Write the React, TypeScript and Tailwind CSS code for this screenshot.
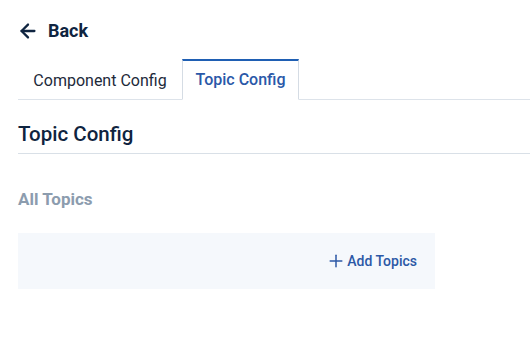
import { ArrowLeft, Plus } from 'lucide-react';

export default function App() {
  return (
    <div className="w-[530px] h-[353px] bg-white pl-[18px] font-['Roboto',sans-serif] overflow-hidden">
      <div className="flex items-center gap-[9px] pt-[20px] h-[42px] text-[#0f2440]">
        <ArrowLeft size={22} strokeWidth={2.5} className="-ml-[1px]" />
        <span className="text-[18px] font-bold leading-none">Back</span>
      </div>

      <div className="flex items-end h-[58px] border-b border-[#dde3ea]">
        <button className="h-[39px] w-[164px] text-[16px] text-[#1d2a3a] -mb-px">Component Config</button>
        <button className="h-[41px] w-[117px] -mb-px bg-white border border-[#d5dce4] border-t-2 border-t-[#1f5fb3] border-b-white text-[16px] text-[#2a58a8] font-medium">
          Topic Config
        </button>
      </div>

      <div className="h-[54px] flex items-end pb-[9px] border-b border-[#d9e0e7]">
        <h2 className="text-[20.5px] font-medium text-[#0f2440] leading-none">Topic Config</h2>
      </div>

      <div className="pt-[37px] text-[17px] font-bold text-[#8c9cae] leading-none">All Topics</div>

      <div className="mt-[25px] w-[417px] h-[56px] bg-[#f5f8fc] flex items-center justify-end pr-[18px]">
        <button className="flex items-center gap-[1px] text-[14px] font-medium text-[#2c58a6]">
          <Plus size={20} strokeWidth={1.8} />
          Add Topics
        </button>
      </div>
    </div>
  );
}
